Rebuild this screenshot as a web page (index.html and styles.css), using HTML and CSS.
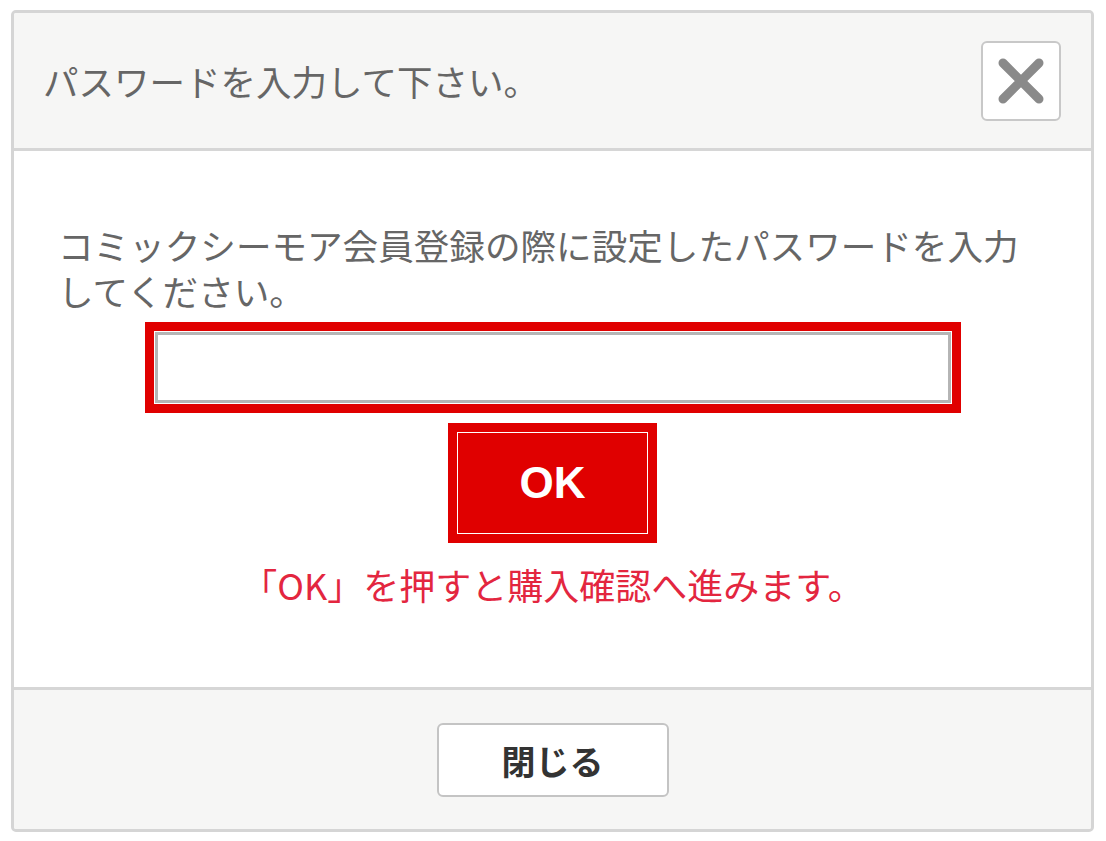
FILE: index.html
```html
<!DOCTYPE html>
<html lang="ja">
<head>
<meta charset="utf-8">
<title>パスワード入力</title>
<link rel="stylesheet" href="styles.css">
</head>
<body>
<div class="dialog">
  <div class="dialog-header">
    <h1 class="dialog-title">パスワードを入力して下さい。</h1>
    <button class="close-x" type="button" aria-label="閉じる">
      <svg width="46" height="46" viewBox="0 0 46 46"><path d="M5 5 L41 41 M41 5 L5 41" stroke="#8a8a8a" stroke-width="9" stroke-linecap="round" fill="none"/></svg>
    </button>
  </div>
  <div class="dialog-body">
    <p class="lead">コミックシーモア会員登録の際に設定したパスワードを入力してください。</p>
    <input class="pw-input" type="password">
    <button class="ok-btn" type="button">OK</button>
    <p class="notice">「OK」を押すと購入確認へ進みます。</p>
  </div>
  <div class="dialog-footer">
    <button class="close-btn" type="button">閉じる</button>
  </div>
</div>
</body>
</html>
```
FILE: styles.css
```css
html, body {
  margin: 0;
  padding: 0;
  background: #ffffff;
}
body {
  font-family: "Noto Sans CJK JP", "Noto Sans", sans-serif;
  padding: 10px 12px 0 11px;
}
.dialog {
  box-sizing: border-box;
  width: 1083px;
  height: 822px;
  border: 3px solid #d5d5d5;
  border-radius: 5px;
  background: #ffffff;
  display: flex;
  flex-direction: column;
  overflow: hidden;
}
.dialog-header {
  height: 135px;
  flex: none;
  background: #f6f6f5;
  border-bottom: 3px solid #d6d6d6;
  display: flex;
  align-items: center;
  justify-content: space-between;
  padding: 0 30px 0 29px;
}
.dialog-title {
  margin: 0;
  font-size: 35.5px;
  font-weight: 400;
  color: #666666;
  line-height: 1;
}
.close-x {
  box-sizing: border-box;
  width: 80px;
  height: 80px;
  border: 2px solid #c8c8c8;
  border-radius: 6px;
  background: #ffffff;
  padding: 0;
  display: flex;
  align-items: center;
  justify-content: center;
  margin-top: 1px;
}
.dialog-body {
  height: 539px;
  flex: none;
  border-bottom: 3px solid #d6d6d6;
  padding: 71px 44px 0;
  box-sizing: border-box;
  display: flex;
  flex-direction: column;
  align-items: center;
}
.lead {
  margin: 0;
  align-self: stretch;
  font-size: 35.6px;
  line-height: 45.5px;
  color: #666666;
}
.pw-input {
  box-sizing: border-box;
  width: 796px;
  height: 71px;
  margin: 19px 0 0;
  border: 3px solid #b5b5b5;
  background: #ffffff;
  outline: 9px solid #e00000;
  outline-offset: 1px;
  border-radius: 0;
}
.ok-btn {
  box-sizing: border-box;
  width: 191px;
  height: 102px;
  margin-top: 29px;
  border: 1px solid #ffffff;
  outline: 9px solid #e00000;
  background: #e00000;
  color: #ffffff;
  font-family: "Liberation Sans", Arial, sans-serif;
  font-weight: 700;
  font-size: 44px;
  padding: 0;
  border-radius: 0;
}
.notice {
  margin: 28px 0 0;
  font-size: 36px;
  line-height: 45.5px;
  color: #e3263f;
}
.dialog-footer {
  flex: 1;
  background: #f6f6f5;
  display: flex;
  align-items: center;
  justify-content: center;
}
.close-btn {
  box-sizing: border-box;
  width: 232px;
  height: 74px;
  border: 2px solid #c4c4c4;
  border-radius: 6px;
  background: #ffffff;
  font-family: "Noto Sans CJK JP", sans-serif;
  font-weight: 700;
  font-size: 34px;
  color: #333333;
  padding: 0;
  margin-top: 1px;
}
```
